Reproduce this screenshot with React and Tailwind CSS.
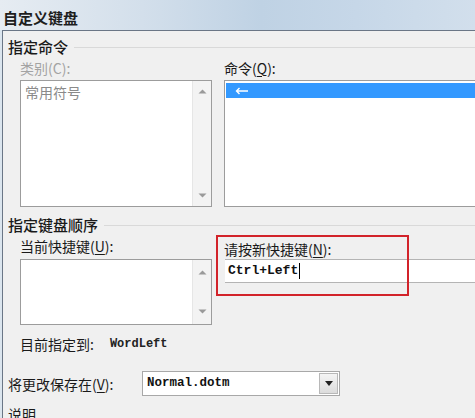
const cjk = "font-['Microsoft_YaHei','Noto_Sans_CJK_SC',sans-serif]";
const mono = "font-['Liberation_Mono','Courier_New',monospace]";

const Key = ({ k }) => (
  <span>
    (<span className="underline underline-offset-2">{k}</span>):
  </span>
);

const ScrollBar = ({ className = "" }) => (
  <div className={`flex w-[19px] flex-col items-center justify-between border-l border-[#e6e6e6] bg-[#f3f3f3] py-[8px] ${className}`}>
    <svg width="9" height="5" viewBox="0 0 9 5">
      <path d="M0.5 4.5 L4.5 0.5 L8.5 4.5 Z" fill="#9a9a9a" />
    </svg>
    <svg width="9" height="5" viewBox="0 0 9 5">
      <path d="M0.5 0.5 L4.5 4.5 L8.5 0.5 Z" fill="#9a9a9a" />
    </svg>
  </div>
);

const GroupTitle = ({ children }) => (
  <div className="flex items-center gap-[6px]">
    <span className="text-[15px] leading-[18px] font-medium text-[#1a1a1a]">{children}</span>
    <div className="h-px flex-1 bg-[#d9d9d9]" />
  </div>
);

export default function App() {
  return (
    <div className={`relative h-[418px] w-[475px] overflow-hidden bg-[#dbe5ee] ${cjk}`}>
      <div className="h-[30px] bg-[linear-gradient(90deg,#e6ecf2_0%,#d3dfeb_30%,#bfd2e4_55%,#c6d7e8_75%,#d2dfec_100%)] pl-[3px] pt-[5px]">
        <span className="text-[15px] leading-[18px] font-semibold text-[#1e1e1e]">自定义键盘</span>
      </div>

      <div className="ml-[2px] h-[388px] border-l border-t border-[#6a7686] bg-[#f0f0f0] pl-[5px] pt-[7px]">
        <GroupTitle>指定命令</GroupTitle>

        <div className="mt-[3px] flex gap-[12px] pl-[12px]">
          <div className="w-[192px]">
            <div className="text-[14px] leading-[18px] text-[#a3a3a3]">类别(C):</div>
            <div className="mt-[3px] flex h-[127px] border border-[#9c9c9c] bg-white">
              <div className="flex-1 pl-[4px] pt-[2px] text-[14px] leading-[18px] text-[#8a8a8a]">常用符号</div>
              <ScrollBar />
            </div>
          </div>

          <div className="flex-1">
            <div className="text-[14px] leading-[18px] text-[#1a1a1a]">
              命令<Key k="Q" />
            </div>
            <div className="mt-[3px] h-[127px] border border-r-0 border-[#9c9c9c] bg-white pt-[2px] pl-px">
              <div className="flex h-[15px] items-center bg-[#3399ff] pl-[9px]">
                <svg width="14" height="8" viewBox="0 0 14 8">
                  <path d="M13 4 H2 M4.5 1 L1.5 4 L4.5 7" stroke="#fff" strokeWidth="1.4" fill="none" />
                </svg>
              </div>
            </div>
          </div>
        </div>

        <div className="mt-[9px]">
          <GroupTitle>指定键盘顺序</GroupTitle>
        </div>

        <div className="mt-[3px] flex gap-[12px] pl-[12px]">
          <div className="w-[192px]">
            <div className="text-[14px] leading-[18px] text-[#1a1a1a]">
              当前快捷键<Key k="U" />
            </div>
            <div className="mt-[4px] flex h-[66px] border border-[#9c9c9c] bg-white">
              <div className="flex-1" />
              <ScrollBar className="py-[10px]" />
            </div>
          </div>

          <div className="relative flex-1 pt-[3px]">
            <div className="text-[14px] leading-[18px] text-[#1a1a1a]">
              请按新快捷键<Key k="N" />
            </div>
            <div className="mt-[1px] ml-px flex h-[24px] items-center border-y border-[#b4b4b4] bg-white pl-[3px]">
              <span className={`${mono} text-[13px] font-bold text-[#111]`}>Ctrl+Left</span>
              <span className="ml-px h-[16px] w-px bg-black" />
            </div>
            <div className="absolute left-[-8px] top-[-2px] h-[61px] w-[193px] border-2 border-[#d2232a]" />
          </div>
        </div>

        <div className="mt-[10px] flex items-center pl-[12px]">
          <span className="text-[14px] leading-[18px] text-[#1a1a1a]">目前指定到:</span>
          <span className={`${mono} ml-[16px] text-[12px] font-bold text-[#222]`}>WordLeft</span>
        </div>

        <div className="mt-[18px] flex items-center">
          <span className="w-[134px] text-[14px] leading-[18px] text-[#1a1a1a]">
            将更改保存在<Key k="V" />
          </span>
          <div className="flex h-[25px] w-[198px] border border-[#a8a8a8] bg-white">
            <div className={`${mono} flex flex-1 items-center pl-[4px] text-[12.5px] font-bold text-[#111]`}>Normal.dotm</div>
            <div className="m-px flex w-[19px] items-center justify-center border border-[#b8b8b8] bg-[linear-gradient(#f4f4f4,#dcdcdc)]">
              <svg width="8" height="5" viewBox="0 0 8 5">
                <path d="M0 0 L8 0 L4 5 Z" fill="#222" />
              </svg>
            </div>
          </div>
        </div>

        <div className="mt-[9px] text-[14px] leading-[18px] text-[#1a1a1a]">说明</div>
      </div>
    </div>
  );
}
